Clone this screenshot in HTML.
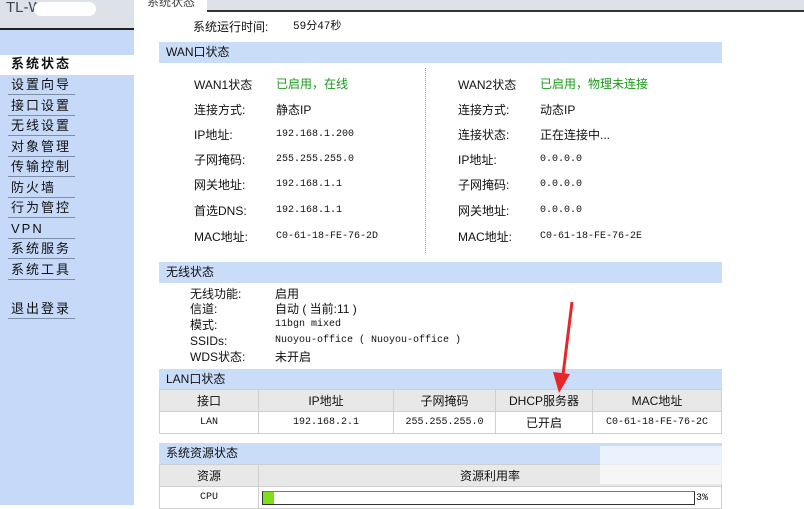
<!DOCTYPE html>
<html><head><meta charset="utf-8"><style>
*{margin:0;padding:0;box-sizing:border-box}
body{width:804px;height:505px;overflow:hidden;background:#fff;position:relative;font-family:"Liberation Sans","Noto Sans CJK SC",sans-serif;font-size:12px;color:#111}
.a{position:absolute;white-space:nowrap;line-height:14px}
.m{font-family:"Liberation Mono","Noto Sans CJK SC",monospace;font-size:10px}
.bar{position:absolute;left:159px;width:563px;height:21px;background:#c9dcf8;font-size:12px;line-height:21px;padding-left:7px}
.nav{position:absolute;left:8px;width:67px;height:20px;border-bottom:1px solid #7d8fa8;font-size:13px;letter-spacing:2px;padding-left:3px;line-height:19px}
.g{color:#1a9a1a}
table{position:absolute;left:159px;width:563px;border-collapse:collapse}
td{border:1px solid #cfcfcf;text-align:center;height:22px;font-size:12px}
.h td{background:#e8e8e8}
</style></head><body>
<div style="position:absolute;left:0;top:0;width:134px;height:28px;background:#dde2e8"></div>
<div class="a" style="left:6px;top:1px;font-size:15px;color:#445">TL-WV</div>
<div style="position:absolute;left:34px;top:2px;width:62px;height:14px;background:#fff;border-radius:8px"></div>
<div style="position:absolute;left:0;top:28px;width:134px;height:2px;background:#222"></div>
<div style="position:absolute;left:0;top:30px;width:134px;height:475px;background:#c6d9f8"></div>
<div style="position:absolute;left:0;top:55px;width:134px;height:20px;background:#fff"></div>
<div class="a" style="left:11px;top:57px;font-size:13px;font-weight:bold;letter-spacing:2px">系统状态</div>
<div class="nav" style="top:75px">设置向导</div>
<div class="nav" style="top:96px">接口设置</div>
<div class="nav" style="top:116px">无线设置</div>
<div class="nav" style="top:137px">对象管理</div>
<div class="nav" style="top:157px">传输控制</div>
<div class="nav" style="top:178px">防火墙</div>
<div class="nav" style="top:198px">行为管控</div>
<div class="nav" style="top:219px">VPN</div>
<div class="nav" style="top:239px">系统服务</div>
<div class="nav" style="top:260px">系统工具</div>
<div class="nav" style="top:299px">退出登录</div>

<div style="position:absolute;left:207px;top:0;width:597px;height:12px;background:#dde2e8;border-bottom:2px solid #333"></div>
<div class="a" style="left:147px;top:-5px;font-size:12px;color:#444">系统状态</div>
<div class="a" style="left:193px;top:20px">系统运行时间:</div>
<div class="a m" style="left:293px;top:20px;font-size:11px">59分47秒</div>

<div class="bar" style="top:42px">WAN口状态</div>
<div style="position:absolute;left:425px;top:68px;height:185px;border-left:1px dotted #999"></div>
<div class="a" style="left:194px;top:78px">WAN1状态</div><div class="a g" style="left:276px;top:77px">已启用，在线</div>
<div class="a" style="left:194px;top:103px">连接方式:</div><div class="a" style="left:276px;top:103px">静态IP</div>
<div class="a" style="left:194px;top:128px">IP地址:</div><div class="a m" style="left:276px;top:128px">192.168.1.200</div>
<div class="a" style="left:194px;top:153px">子网掩码:</div><div class="a m" style="left:276px;top:153px">255.255.255.0</div>
<div class="a" style="left:194px;top:178px">网关地址:</div><div class="a m" style="left:276px;top:178px">192.168.1.1</div>
<div class="a" style="left:194px;top:204px">首选DNS:</div><div class="a m" style="left:276px;top:204px">192.168.1.1</div>
<div class="a" style="left:194px;top:230px">MAC地址:</div><div class="a m" style="left:276px;top:230px">C0-61-18-FE-76-2D</div>

<div class="a" style="left:458px;top:78px">WAN2状态</div><div class="a g" style="left:540px;top:77px">已启用，物理未连接</div>
<div class="a" style="left:458px;top:103px">连接方式:</div><div class="a" style="left:540px;top:103px">动态IP</div>
<div class="a" style="left:458px;top:128px">连接状态:</div><div class="a" style="left:540px;top:128px">正在连接中...</div>
<div class="a" style="left:458px;top:153px">IP地址:</div><div class="a m" style="left:540px;top:153px">0.0.0.0</div>
<div class="a" style="left:458px;top:178px">子网掩码:</div><div class="a m" style="left:540px;top:178px">0.0.0.0</div>
<div class="a" style="left:458px;top:204px">网关地址:</div><div class="a m" style="left:540px;top:204px">0.0.0.0</div>
<div class="a" style="left:458px;top:230px">MAC地址:</div><div class="a m" style="left:540px;top:230px">C0-61-18-FE-76-2E</div>

<div class="bar" style="top:262px">无线状态</div>
<div class="a" style="left:190px;top:287px">无线功能:</div><div class="a" style="left:275px;top:287px">启用</div>
<div class="a" style="left:190px;top:302px">信道:</div><div class="a" style="left:275px;top:302px">自动 ( 当前:11 )</div>
<div class="a" style="left:190px;top:318px">模式:</div><div class="a m" style="left:275px;top:318px">11bgn mixed</div>
<div class="a" style="left:190px;top:334px">SSIDs:</div><div class="a m" style="left:275px;top:334px">Nuoyou-office ( Nuoyou-office )</div>
<div class="a" style="left:190px;top:350px">WDS状态:</div><div class="a" style="left:275px;top:350px">未开启</div>

<div class="bar" style="top:369px">LAN口状态</div>
<table style="top:389px"><tr class="h"><td style="width:99px">接口</td><td style="width:135px">IP地址</td><td style="width:102px">子网掩码</td><td style="width:97px">DHCP服务器</td><td>MAC地址</td></tr>
<tr><td class="m">LAN</td><td class="m">192.168.2.1</td><td class="m">255.255.255.0</td><td>已开启</td><td class="m">C0-61-18-FE-76-2C</td></tr></table>

<div class="bar" style="top:443px">系统资源状态</div>
<table style="top:464px"><tr class="h"><td style="width:99px;height:21px">资源</td><td>资源利用率</td></tr>
<tr><td class="m" style="height:20px">CPU</td><td style="text-align:left;padding-left:3px"><div style="width:433px;height:14px;border:1px solid #333;border-top-color:#777;background:#fff"><div style="width:11px;height:12px;background:#7de01a"></div></div></td></tr></table>
<div class="a m" style="left:696px;top:492px">3%</div>
<div style="position:absolute;left:600px;top:446px;width:204px;height:38px;background:rgba(255,255,255,.6)"></div>
<svg style="position:absolute;left:0;top:0" width="804" height="505"><line x1="572" y1="302" x2="563" y2="375" stroke="#e8262a" stroke-width="3"/><polygon points="553,372 570,374 559,393" fill="#e8262a"/></svg>
</body></html>
